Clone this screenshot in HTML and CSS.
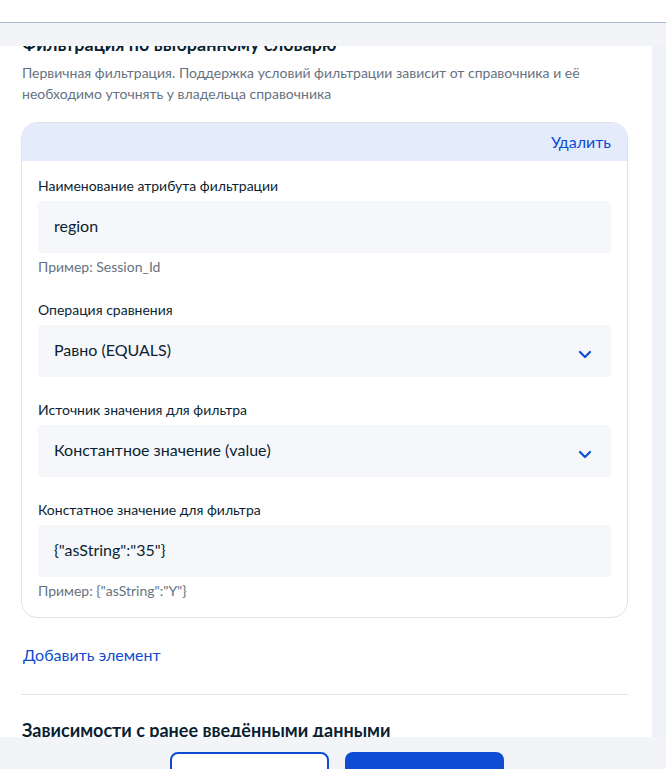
FILE: index.html
```html
<!DOCTYPE html>
<html lang="ru">
<head>
<meta charset="utf-8">
<title>Фильтрация</title>
<link rel="stylesheet" href="styles.css">
</head>
<body>
<div class="topbar"></div>
<div class="stage">
  <div class="panel">
    <div class="scroll">
      <h2 class="title">Фильтрация по выбранному словарю</h2>
      <p class="desc">Первичная фильтрация. Поддержка условий фильтрации зависит от справочника и её необходимо уточнять у владельца справочника</p>
      <div class="card">
        <div class="card-head"><a class="link">Удалить</a></div>
        <div class="card-body">
          <div class="field">
            <div class="label">Наименование атрибута фильтрации</div>
            <div class="input">region</div>
            <div class="hint">Пример: Session_Id</div>
          </div>
          <div class="field">
            <div class="label">Операция сравнения</div>
            <div class="input select"><span>Равно (EQUALS)</span>
              <svg class="chev" width="14" height="9" viewBox="0 0 14 9"><path d="M2 2 L7 7 L12 2" fill="none" stroke="#0d4cd3" stroke-width="2.2" stroke-linecap="round" stroke-linejoin="round"/></svg>
            </div>
          </div>
          <div class="field">
            <div class="label">Источник значения для фильтра</div>
            <div class="input select"><span>Константное значение (value)</span>
              <svg class="chev" width="14" height="9" viewBox="0 0 14 9"><path d="M2 2 L7 7 L12 2" fill="none" stroke="#0d4cd3" stroke-width="2.2" stroke-linecap="round" stroke-linejoin="round"/></svg>
            </div>
          </div>
          <div class="field last">
            <div class="label">Констатное значение для фильтра</div>
            <div class="input">{"asString":"35"}</div>
            <div class="hint">Пример: {"asString":"Y"}</div>
          </div>
        </div>
      </div>
      <a class="link add">Добавить элемент</a>
      <div class="divider"></div>
      <h2 class="title second">Зависимости с ранее введёнными данными</h2>
    </div>
  </div>
  <div class="track"></div>
</div>
<div class="footer">
  <button class="btn outline"></button>
  <button class="btn primary"></button>
</div>
</body>
</html>
```
FILE: styles.css
```css
html, body {
  margin: 0;
  padding: 0;
  height: 100%;
  overflow: hidden;
}
body {
  font-family: Lato, "Noto Sans", sans-serif;
  color: #0b1f33;
  background: #ffffff;
}
.topbar {
  height: 22px;
  border-bottom: 1px solid #a8b5d0;
  background: #ffffff;
}
.stage {
  display: flex;
  background: #f2f4f8;
  padding-top: 23px;
  height: 691px;
}
.panel {
  width: 652px;
  height: 691px;
  background: #ffffff;
  overflow: hidden;
}
.track {
  flex: 1;
  background: #eef1f7;
}
.scroll {
  margin-top: -14px;
  padding: 0 24px 0 21px;
}
.title {
  margin: 0;
  font-size: 18px;
  line-height: 24px;
  font-weight: 700;
  padding-left: 1px;
}
.desc {
  margin: 6px 0 0;
  font-size: 14px;
  line-height: 21px;
  color: #66727f;
  padding-left: 1px;
}
.card {
  margin-top: 18px;
  border: 1px solid #dfe2e7;
  border-radius: 16px;
  overflow: hidden;
}
.card-head {
  height: 38px;
  background: #e4ecfc;
  display: flex;
  justify-content: flex-end;
  align-items: center;
  padding: 0 16px;
}
.link {
  color: #0d4cd3;
  font-size: 16px;
  line-height: 24px;
  cursor: pointer;
}
.card-body {
  padding: 15px 16px 16px;
  display: flex;
  flex-direction: column;
  gap: 23px;
}
.label {
  font-size: 14px;
  line-height: 20px;
  margin-bottom: 5px;
}
.input {
  height: 52px;
  box-sizing: border-box;
  background: #f5f7fa;
  border-radius: 4px;
  padding: 0 19px 4px 16px;
  display: flex;
  align-items: center;
  font-size: 16px;
}
.select {
  justify-content: space-between;
}
.chev {
  display: block;
  margin-top: 10px;
}
.hint {
  margin-top: 4px;
  font-size: 14px;
  line-height: 20px;
  color: #66727f;
}
.add {
  display: block;
  margin-top: 25px;
  padding-left: 2px;
}
.divider {
  margin-top: 27px;
  height: 1px;
  background: #e1e3e7;
}
.second {
  margin-top: 23px;
}
.footer {
  height: 32px;
  background: #f2f4f8;
  display: flex;
  justify-content: center;
  gap: 16px;
  padding: 15px 0 0 8px;
  box-sizing: border-box;
  overflow: hidden;
}
.btn {
  width: 159px;
  height: 48px;
  border-radius: 8px;
  flex: none;
  box-sizing: border-box;
}
.outline {
  background: #ffffff;
  border: 2px solid #0d4cd3;
}
.primary {
  background: #0d4cd3;
  border: 0;
}
```
